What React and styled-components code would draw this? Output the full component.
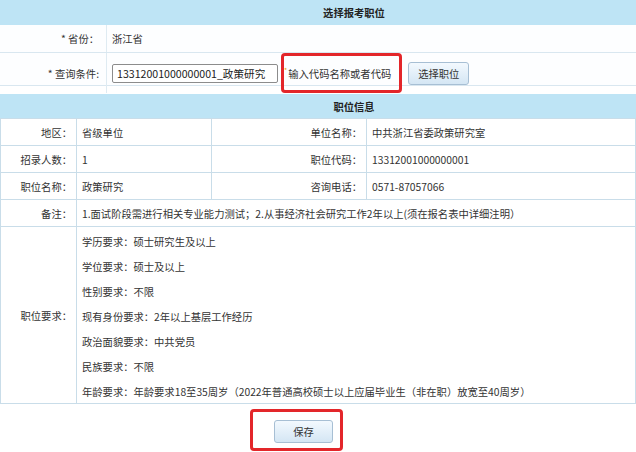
import React from 'react';
import styled, { createGlobalStyle } from 'styled-components';

const GlobalStyle = createGlobalStyle`
  html, body {
    margin: 0;
    padding: 0;
    background: #fff;
  }
  body {
    font-family: "Noto Sans CJK SC", "Noto Sans", sans-serif;
    font-size: 10.3px;
    color: #333;
  }
`;

const Page = styled.div`
  width: 636px;
  height: 452px;
  overflow: hidden;
`;

const HeadBar = styled.div`
  height: 25px;
  background: #bee4f5;
  display: flex;
  align-items: center;
  justify-content: center;
  padding-left: 72px;
  font-weight: 700;
  color: #222;
  box-sizing: border-box;
  border-bottom: 1px solid ${p => (p.$line ? '#c9dde9' : '#bee4f5')};
`;

const FormRow = styled.div`
  display: grid;
  grid-template-columns: 107px 1fr;
  height: ${p => p.$h}px;
  border-bottom: 1px solid #d9e7f0;
  box-sizing: border-box;
  background: #fdfeff;
`;

const FormLabel = styled.div`
  display: flex;
  align-items: center;
  justify-content: flex-end;
  padding-right: 7px;
  border-right: 1px solid #dfebf2;
`;

const FormValue = styled.div`
  display: flex;
  align-items: center;
  padding-left: 5px;
  gap: 6px;
`;

const TextInput = styled.div`
  width: 166px;
  height: 19px;
  box-sizing: border-box;
  border: 1px solid #8c8c8c;
  border-radius: 2px;
  padding-left: 4px;
  display: flex;
  align-items: center;
  background: #fff;
  color: #222;
  font-size: 10.6px;
`;

const Marked = styled.div`
  display: flex;
  align-items: center;
  box-sizing: border-box;
  border: 3px solid #e3262a;
  border-radius: 4px;
  height: ${p => p.$h}px;
  padding: ${p => p.$pad};
  margin-left: ${p => p.$ml || 0}px;
  flex-shrink: 0;
`;

const Star = styled.span`
  color: #f2a000;
  font-size: 7px;
  margin-right: 1px;
  align-self: flex-start;
  margin-top: 9px;
`;

const Button = styled.div`
  display: flex;
  align-items: center;
  justify-content: center;
  width: ${p => p.$w}px;
  height: 23px;
  box-sizing: border-box;
  border: 1px solid #a7bfd4;
  border-radius: 3px;
  background: linear-gradient(#f3f9fe, #d4e6f4);
  color: #333;
`;

const Gap = styled.div`
  height: 8px;
`;

const InfoTable = styled.div`
  display: grid;
  grid-template-columns: 76px 135px 155px 269px;
  border-left: 1px solid #c9dde9;
`;

const Cell = styled.div`
  display: flex;
  align-items: center;
  box-sizing: border-box;
  height: ${p => p.$h || 27}px;
  border-right: 1px solid #c9dde9;
  border-bottom: 1px solid #c9dde9;
  grid-column: ${p => p.$span || 'auto'};
  justify-content: ${p => (p.$label ? 'flex-end' : 'flex-start')};
  padding: ${p => (p.$label ? '0 4px 0 0' : '0 0 0 5px')};
`;

const ReqList = styled.div`
  display: flex;
  flex-direction: column;
  justify-content: flex-start;
  padding: 2px 0 0 5px;
  box-sizing: border-box;
  height: 177px;
  border-right: 1px solid #c9dde9;
  border-bottom: 1px solid #c9dde9;
  grid-column: 2 / 5;
`;

const ReqLine = styled.div`
  height: 25px;
  line-height: 25px;
  white-space: nowrap;
`;

const SaveArea = styled.div`
  display: flex;
  padding: 5px 0 0 250px;
`;

const requirements = [
  '学历要求：硕士研究生及以上',
  '学位要求：硕士及以上',
  '性别要求：不限',
  '现有身份要求：2年以上基层工作经历',
  '政治面貌要求：中共党员',
  '民族要求：不限',
  '年龄要求：年龄要求18至35周岁（2022年普通高校硕士以上应届毕业生（非在职）放宽至40周岁）',
];

export default function App() {
  return (
    <Page>
      <GlobalStyle />
      <HeadBar>选择报考职位</HeadBar>
      <FormRow $h={28}>
        <FormLabel>* 省份：</FormLabel>
        <FormValue>浙江省</FormValue>
      </FormRow>
      <FormRow $h={33}>
        <FormLabel>* 查询条件:</FormLabel>
        <FormValue>
          <TextInput>13312001000000001_政策研究</TextInput>
          <Marked $h={40} $pad="0 8px 0 0" $ml={-3}>
            <Star>*</Star>
            输入代码名称或者代码
          </Marked>
          <Button $w={61}>选择职位</Button>
        </FormValue>
      </FormRow>
      <Gap />
      <HeadBar $line>职位信息</HeadBar>
      <InfoTable>
        <Cell $label>地区：</Cell>
        <Cell>省级单位</Cell>
        <Cell $label>单位名称：</Cell>
        <Cell>中共浙江省委政策研究室</Cell>

        <Cell $label>招录人数：</Cell>
        <Cell>1</Cell>
        <Cell $label>职位代码：</Cell>
        <Cell>13312001000000001</Cell>

        <Cell $label>职位名称：</Cell>
        <Cell>政策研究</Cell>
        <Cell $label>咨询电话：</Cell>
        <Cell>0571-87057066</Cell>

        <Cell $label>备注：</Cell>
        <Cell $span="2 / 5">1.面试阶段需进行相关专业能力测试；2.从事经济社会研究工作2年以上(须在报名表中详细注明）</Cell>

        <Cell $label $h={177}>职位要求：</Cell>
        <ReqList>
          {requirements.map(r => (
            <ReqLine key={r}>{r}</ReqLine>
          ))}
        </ReqList>
      </InfoTable>
      <SaveArea>
        <Marked $h={42} $pad="2px 7px 0 21px">
          <Button $w={59}>保存</Button>
        </Marked>
      </SaveArea>
    </Page>
  );
}
